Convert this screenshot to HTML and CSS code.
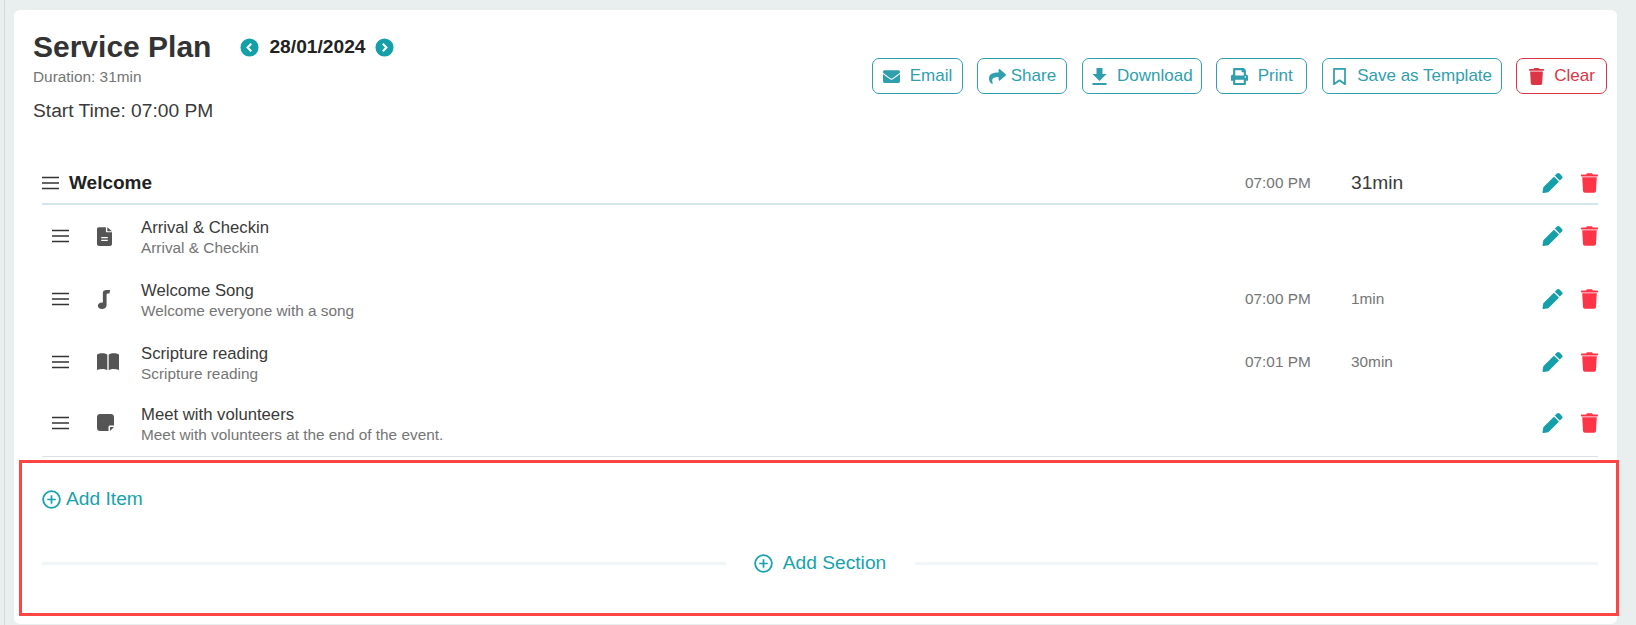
FILE: index.html
```html
<!DOCTYPE html>
<html lang="en">
<head>
<meta charset="utf-8">
<title>Service Plan</title>
<link rel="stylesheet" href="styles.css">
</head>
<body>
<svg class="sprite" width="0" height="0" aria-hidden="true">
  <symbol id="i-mail" viewBox="0 0 512 512"><path d="M502.3 190.8c3.9-3.1 9.7-.2 9.7 4.7V400c0 26.5-21.5 48-48 48H48c-26.5 0-48-21.5-48-48V195.6c0-5 5.7-7.8 9.7-4.7 22.4 17.4 52.1 39.5 154.1 113.6 21.1 15.4 56.7 47.8 92.2 47.6 35.7.3 72-32.8 92.3-47.6 102-74.1 131.6-96.3 154-113.7zM256 320c23.2.4 56.6-29.2 73.4-41.4 132.7-96.3 142.8-104.7 173.4-128.7 5.8-4.5 9.2-11.5 9.2-18.9v-19c0-26.5-21.5-48-48-48H48C21.5 64 0 85.5 0 112v19c0 7.4 3.4 14.3 9.2 18.9 30.6 23.9 40.7 32.4 173.4 128.7 16.8 12.2 50.2 41.8 73.4 41.4z"/></symbol>
  <symbol id="i-share" viewBox="0 0 512 512"><path d="M503.691 189.836L327.687 37.851C312.281 24.546 288 35.347 288 56.015v80.053C127.371 137.907 0 170.1 0 322.326c0 61.441 39.581 122.309 83.333 154.132 13.653 9.931 33.111-2.533 28.077-18.631C66.066 312.814 132.917 274.316 288 272.085V360c0 20.7 24.3 31.453 39.687 18.164l176.004-152c11.071-9.562 11.086-26.753 0-36.328z"/></symbol>
  <symbol id="i-down" viewBox="5 3 14 17"><path d="M19 9h-4V3H9v6H5l7 7 7-7zM5 18v2h14v-2H5z"/></symbol>
  <symbol id="i-print" viewBox="0 0 512 512"><path d="M448 192V77.25c0-8.49-3.37-16.62-9.37-22.63L393.37 9.37c-6-6-14.14-9.37-22.63-9.37H96C78.33 0 64 14.33 64 32v160c-35.35 0-64 28.65-64 64v112c0 8.84 7.16 16 16 16h48v96c0 17.67 14.33 32 32 32h320c17.67 0 32-14.33 32-32v-96h48c8.84 0 16-7.16 16-16V256c0-35.35-28.65-64-64-64zm-64 256H128v-96h256v96zm0-224H128V64h192v48c0 8.84 7.16 16 16 16h48v96zm48 72c-13.25 0-24-10.75-24-24 0-13.26 10.75-24 24-24s24 10.74 24 24c0 13.25-10.75 24-24 24z"/></symbol>
  <symbol id="i-mark" viewBox="3.800 .9 16.400 21.600"><path d="M5 2h14v19.500l-7-5-7 5z" fill="none" stroke="currentColor" stroke-width="2.200" stroke-linejoin="round"/></symbol>
  <symbol id="i-trash" viewBox="0 0 448 512"><path d="M432 32H312l-9.400-18.700A24 24 0 0 0 281.100 0H166.800a23.720 23.720 0 0 0-21.400 13.300L136 32H16A16 16 0 0 0 0 48v20a16 16 0 0 0 16 16h416a16 16 0 0 0 16-16V48a16 16 0 0 0-16-16zM53.200 467a48 48 0 0 0 47.900 45h245.800a48 48 0 0 0 47.900-45L416 104H32z"/></symbol>
  <symbol id="i-pen" viewBox="0 0 512 512"><path d="M497.900 142.100l-46.100 46.100c-4.700 4.700-12.300 4.700-17 0l-111-111c-4.700-4.700-4.700-12.300 0-17l46.100-46.100c18.700-18.700 49.100-18.700 67.900 0l60.100 60.100c18.800 18.700 18.800 49.100 0 67.900zM284.200 99.800L21.600 362.400.4 483.900c-2.900 16.400 11.400 30.600 27.800 27.800l121.500-21.300 262.600-262.600c4.700-4.700 4.700-12.300 0-17l-111-111c-4.800-4.700-12.400-4.700-17.100 0z"/></symbol>
  <symbol id="i-bars" viewBox="0 0 17 14"><path d="M0 1.500h17M0 7h17M0 12.500h17" fill="none" stroke="currentColor" stroke-width="1.700"/></symbol>
  <symbol id="i-file" viewBox="0 0 16 20"><path d="M2 0h7.500v4.500c0 .6.400 1 1 1H16V18c0 1.100-.9 2-2 2H2c-1.100 0-2-.9-2-2V2C0 .9.900 0 2 0zm2.500 10.500v1.300h7v-1.300zm0 3v1.300h7v-1.300zM11 0l5 4.300h-5z" fill-rule="evenodd"/></symbol>
  <symbol id="i-music" viewBox="0 0 14 20"><path d="M5.800 3C5.800 1 7.500 0 9.500 0h4l-.8 3.800H11c-.8 0-1.300.4-1.300 1.200V16c0 2.300-2.100 4-4.800 4C2.300 20 .5 18.500.5 16.700c0-2 2-3.600 4.100-3.600.5 0 .9.100 1.200.2z"/></symbol>
  <symbol id="i-book" viewBox="0 0 22 17"><path d="M0 1.500C3-.3 7.500-.3 10.300 1.500V17C7.500 15.500 3 15.500 0 17zM22 1.500C19-.3 14.500-.3 11.700 1.500V17c2.800-1.500 7.300-1.500 10.300 0z"/></symbol>
  <symbol id="i-note" viewBox="0 0 17 17"><path d="M3 0h11c1.700 0 3 1.300 3 3v8.500h-4c-.8 0-1.500.700-1.500 1.500v4H3c-1.700 0-3-1.300-3-3V3C0 1.300 1.300 0 3 0zM13 13h4l-4 4z"/></symbol>
  <symbol id="i-plus" viewBox="0 0 20 20"><circle cx="10" cy="10" r="8.800" fill="none" stroke="currentColor" stroke-width="1.900"/><path d="M10 5.500v9M5.500 10h9" fill="none" stroke="currentColor" stroke-width="1.800"/></symbol>
  <symbol id="i-prev" viewBox="0 0 20 20"><circle cx="10" cy="10" r="9.500" fill="currentColor"/><path d="M11.800 6 8 10l3.800 4" fill="none" stroke="#fff" stroke-width="2.200"/></symbol>
  <symbol id="i-next" viewBox="0 0 20 20"><circle cx="10" cy="10" r="9.500" fill="currentColor"/><path d="M8.200 6 12 10l-3.800 4" fill="none" stroke="#fff" stroke-width="2.200"/></symbol>
</svg>

<div class="rail"></div>
<main class="card">
  <header class="head">
    <div class="head-left">
      <div class="title-row">
        <h1 class="title">Service Plan</h1>
        <div class="date-nav">
          <svg class="nav-ic"><use href="#i-prev"/></svg>
          <span class="date">28/01/2024</span>
          <svg class="nav-ic"><use href="#i-next"/></svg>
        </div>
      </div>
      <div class="duration">Duration: 31min</div>
      <div class="start">Start Time: 07:00 PM</div>
    </div>
    <div class="actions">
      <a class="btn btn-email"><svg class="btn-ic"><use href="#i-mail"/></svg>Email</a>
      <a class="btn btn-share"><svg class="btn-ic"><use href="#i-share"/></svg>Share</a>
      <a class="btn btn-down"><svg class="btn-ic"><use href="#i-down"/></svg>Download</a>
      <a class="btn btn-print"><svg class="btn-ic"><use href="#i-print"/></svg>Print</a>
      <a class="btn btn-save"><svg class="btn-ic"><use href="#i-mark"/></svg>Save as Template</a>
      <a class="btn btn-clear"><svg class="btn-ic"><use href="#i-trash"/></svg>Clear</a>
    </div>
  </header>

  <section class="plan">
    <div class="section-row">
      <svg class="bars bars-head"><use href="#i-bars"/></svg>
      <strong class="section-name">Welcome</strong>
      <span class="time">07:00 PM</span>
      <span class="section-dur">31min</span>
      <svg class="pen"><use href="#i-pen"/></svg>
      <svg class="bin"><use href="#i-trash"/></svg>
    </div>

    <div class="items">
      <div class="item">
        <svg class="bars"><use href="#i-bars"/></svg>
        <span class="type"><svg class="type-ic ic-file"><use href="#i-file"/></svg></span>
        <div class="item-text"><div class="item-name">Arrival &amp; Checkin</div><div class="item-sub">Arrival &amp; Checkin</div></div>
        <svg class="pen"><use href="#i-pen"/></svg>
        <svg class="bin"><use href="#i-trash"/></svg>
      </div>
      <div class="item">
        <svg class="bars"><use href="#i-bars"/></svg>
        <span class="type"><svg class="type-ic ic-music"><use href="#i-music"/></svg></span>
        <div class="item-text"><div class="item-name">Welcome Song</div><div class="item-sub">Welcome everyone with a song</div></div>
        <span class="time">07:00 PM</span>
        <span class="item-dur">1min</span>
        <svg class="pen"><use href="#i-pen"/></svg>
        <svg class="bin"><use href="#i-trash"/></svg>
      </div>
      <div class="item">
        <svg class="bars"><use href="#i-bars"/></svg>
        <span class="type"><svg class="type-ic ic-book"><use href="#i-book"/></svg></span>
        <div class="item-text"><div class="item-name">Scripture reading</div><div class="item-sub">Scripture reading</div></div>
        <span class="time">07:01 PM</span>
        <span class="item-dur">30min</span>
        <svg class="pen"><use href="#i-pen"/></svg>
        <svg class="bin"><use href="#i-trash"/></svg>
      </div>
      <div class="item item-last">
        <svg class="bars"><use href="#i-bars"/></svg>
        <span class="type"><svg class="type-ic ic-note"><use href="#i-note"/></svg></span>
        <div class="item-text"><div class="item-name">Meet with volunteers</div><div class="item-sub">Meet with volunteers at the end of the event.</div></div>
        <svg class="pen"><use href="#i-pen"/></svg>
        <svg class="bin"><use href="#i-trash"/></svg>
      </div>
    </div>
  </section>

  <section class="adders">
    <a class="add-item"><svg class="plus"><use href="#i-plus"/></svg>Add Item</a>
    <div class="add-section">
      <span class="rule"></span>
      <a class="add-link"><svg class="plus"><use href="#i-plus"/></svg>Add Section</a>
      <span class="rule"></span>
    </div>
  </section>
</main>
</body>
</html>
```
FILE: styles.css
```css
* { box-sizing: border-box; }
html, body { margin: 0; height: 625px; overflow: hidden; }
body {
  background: #e9eeef;
  font-family: "Liberation Sans", Arial, sans-serif;
  color: #333;
  display: flex;
  padding-top: 10px;
}
.sprite { position: absolute; }
svg { display: block; flex: none; fill: currentColor; }

.rail {
  width: 5px;
  margin-top: -10px;
  border-right: 1px solid #d5d9da;
}
.card {
  width: 1603px;
  height: 614px;
  margin-left: 9px;
  background: #fff;
  border-radius: 6px;
  padding: 0 19px;
}

/* Header */
.head { display: flex; justify-content: space-between; height: 143px; }
.head-left { padding-top: 21px; }
.title-row { display: flex; align-items: center; }
.title { margin: 0; font-size: 30px; line-height: 32px; font-weight: 700; color: #333; }
.date-nav { display: flex; align-items: center; margin-left: 29px; }
.nav-ic { width: 19px; height: 19px; color: #149fa9; }
.date { font-size: 19.2px; font-weight: 700; color: #222; margin: 0 10px; }
.duration { font-size: 15.36px; line-height: 16px; color: #757575; margin-top: 6px; }
.start { font-size: 19.2px; line-height: 22px; margin-top: 15px; color: #3a3a3a; }

.actions { display: flex; gap: 14.4px; padding-top: 48px; margin-right: -9px; }
.btn {
  display: flex;
  align-items: center;
  justify-content: center;
  height: 36px;
  border: 1px solid #2f9fae;
  border-radius: 7px;
  color: #2f9fae;
  font-size: 17px;
}
.btn-email { width: 91px; gap: 10px; }
.btn-share { width: 90px; gap: 5px; }
.btn-down { width: 120px; gap: 9px; }
.btn-print { width: 91px; gap: 10px; }
.btn-save { width: 180px; gap: 9px; }
.btn-clear { width: 91px; gap: 9px; color: #dc3545; border-color: #dc3545; }
.btn-ic { width: 17px; height: 17px; }

/* Plan list */
.plan { margin: 0 0 0 9px; width: 1556px; }
.section-row {
  display: flex;
  align-items: center;
  height: 52px;
  padding-top: 10px;
  border-bottom: 2px solid #d2e5ef;
}
.bars { width: 17px; height: 14px; color: #333; }
.bars-head { margin-right: 10px; }
.section-name { flex: 1; font-size: 19px; color: #222; }
.time { width: 106px; font-size: 15.36px; color: #757575; }
.section-dur { width: 191px; font-size: 19.2px; color: #3a3a3a; }
.pen { width: 21px; height: 20px; color: #149fa9; }
.bin { width: 17px; height: 20px; margin-left: 18px; color: #ff3547; }

.item { display: flex; align-items: center; height: 62.7px; padding-left: 10px; }
.item-last { height: 64px; padding-bottom: 4px; border-bottom: 1px solid #dee2e6; }
.type { width: 72px; padding-left: 28px; }
.type-ic { width: 15px; height: 19px; color: #555; }
.ic-music { width: 14px; }
.ic-book { width: 22px; height: 17px; }
.ic-note { width: 17px; height: 17px; }
.item-text { flex: 1; margin-top: 4px; }
.item-name { font-size: 16.7px; line-height: 20px; color: #3a3a3a; }
.item-sub { font-size: 15.36px; line-height: 20px; color: #757575; }
.item-dur { width: 191px; font-size: 15.36px; color: #757575; }

/* Adders */
.adders {
  width: 1600px;
  height: 156px;
  margin: 3px 0 0 -14px;
  border: 3px solid #ff4444;
  padding: 0 18px 0 20px;
}
.add-item {
  display: flex;
  align-items: center;
  gap: 5px;
  margin-top: 24px;
  height: 24px;
  font-size: 19.2px;
  color: #17a2ad;
}
.plus { width: 19px; height: 19px; color: #17a2ad; }
.add-section { display: flex; align-items: center; margin-top: 41px; }
.rule { flex: 1; height: 3px; background: #f1f6f8; }
.add-link {
  display: flex;
  align-items: center;
  gap: 10px;
  width: 189px;
  justify-content: center;
  font-size: 19.2px;
  color: #17a2ad;
}
```
